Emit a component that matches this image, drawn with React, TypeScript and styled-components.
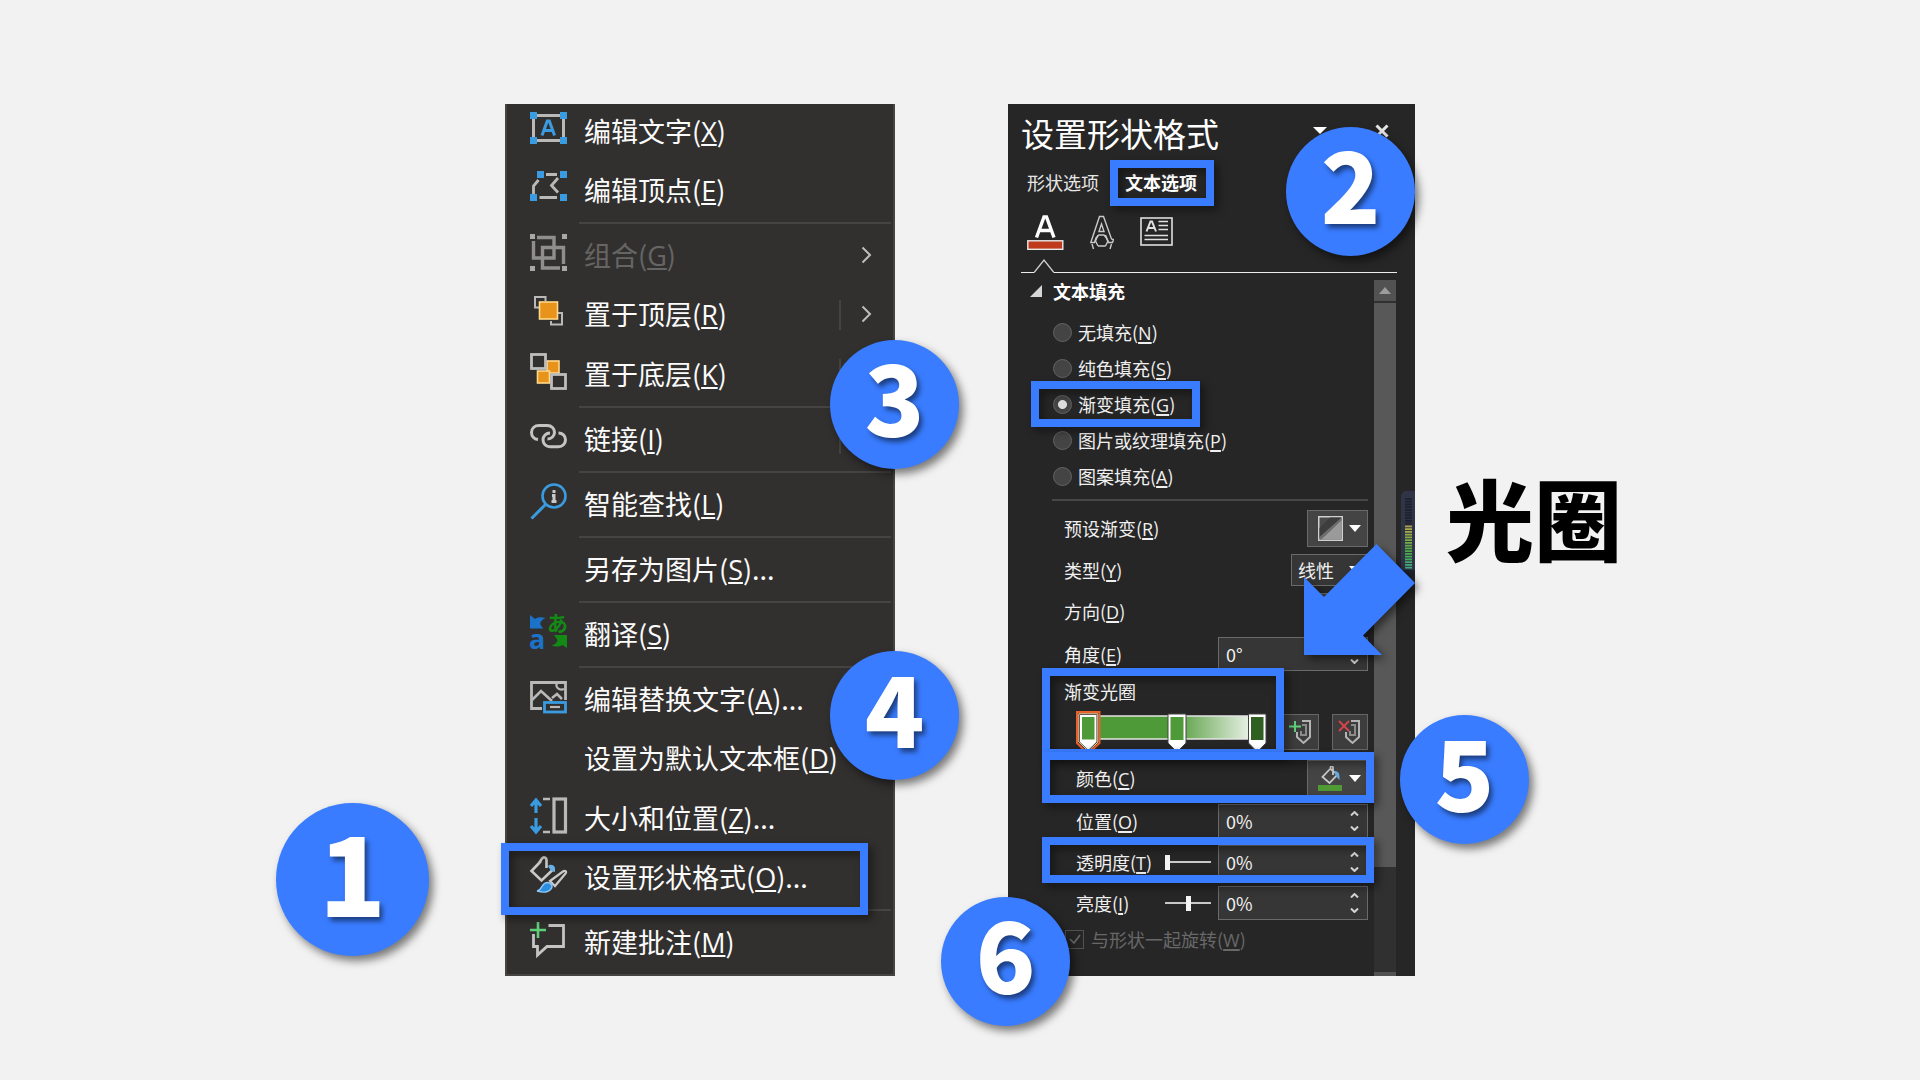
import React, { ReactNode, useState } from "react";
import styled, { createGlobalStyle, css } from "styled-components";

const blue = "#397cff";
const fontStack = `"Noto Sans CJK SC", "Noto Sans", sans-serif`;

const GlobalStyle = createGlobalStyle`
  *, *::before, *::after { box-sizing: border-box; }
  body {
    margin: 0;
    background: #f2f2f2;
    font-family: ${fontStack};
  }
  button, input, select { font: inherit; color: inherit; }
`;

const Stage = styled.main`
  min-height: 100vh;
  display: flex;
  justify-content: center;
  align-items: center;
`;

const Panels = styled.div`
  display: flex;
  align-items: stretch;
  gap: 113px;
`;

/* ---------- annotations ---------- */

interface Inset {
  $top?: number;
  $right?: number;
  $bottom?: number;
  $left?: number;
}

const inset = css<Inset>`
  ${(p) => p.$top !== undefined && `top: ${p.$top}px;`}
  ${(p) => p.$right !== undefined && `right: ${p.$right}px;`}
  ${(p) => p.$bottom !== undefined && `bottom: ${p.$bottom}px;`}
  ${(p) => p.$left !== undefined && `left: ${p.$left}px;`}
`;

const Highlight = styled.span<Inset>`
  position: absolute;
  z-index: 1;
  ${inset}
  border: 8px solid ${blue};
  filter: drop-shadow(4px 4px 4px rgba(0, 0, 0, 0.45));
  pointer-events: none;
`;

const Badge = styled.span<Inset & { $large?: boolean }>`
  position: absolute;
  z-index: 3;
  ${inset}
  width: ${(p) => (p.$large ? 153 : 129)}px;
  height: ${(p) => (p.$large ? 153 : 129)}px;
  padding-bottom: 22px;
  display: flex;
  justify-content: center;
  align-items: center;
  border-radius: 50%;
  background: ${blue};
  box-shadow: 4px 5px 8px rgba(0, 0, 0, 0.5);
  color: #fff;
  font-size: ${(p) => (p.$large ? 110 : 98)}px;
  font-weight: 900;
  line-height: 1;
  text-shadow: 3px 4px 5px rgba(0, 0, 0, 0.5);
`;

const Caption = styled.p`
  position: absolute;
  top: 368px;
  left: 438px;
  margin: 0;
  color: #000;
  font-size: 88px;
  font-weight: 900;
  line-height: 88px;
  white-space: nowrap;
`;

const ArrowSvg = styled.svg`
  position: absolute;
  z-index: 2;
  top: 440px;
  left: 296px;
  overflow: visible;
  filter: drop-shadow(4px 4px 4px rgba(0, 0, 0, 0.5));
  pointer-events: none;
`;

/* ---------- context menu ---------- */

const Menu = styled.nav`
  position: relative;
  width: 390px;
  display: flex;
  flex-direction: column;
  padding-bottom: 2px;
  background: #32302f;
  box-shadow: inset 2px -2px 0 #454443, inset -2px 0 0 #454443;
`;

const MenuItem = styled.button`
  position: relative;
  flex: 1 0 auto;
  display: flex;
  align-items: center;
  padding: 6px 15px 10px 25px;
  border: 0;
  background: none;
  color: #fbfbfb;
  font-size: 27px;
  line-height: 40px;
  text-align: left;
  white-space: nowrap;

  &:disabled {
    color: #666564;
  }
`;

const IconSlot = styled.span`
  width: 37px;
  height: 37px;
  margin: 0 17px 6px 0;
  flex: none;

  svg {
    display: block;
    overflow: visible;
  }
`;

const MenuLabel = styled.span`
  flex: 1;
`;

const Submenu = styled.span<{ $split?: boolean }>`
  height: 30px;
  display: flex;
  align-items: center;
  padding: 0 8px 2px 20px;
  border-left: 2px solid ${(p) => (p.$split ? "#444342" : "transparent")};
`;

const Separator = styled.hr`
  flex: none;
  width: 312px;
  height: 2px;
  margin: 0 0 4px 74px;
  border: 0;
  background: #454442;
`;

const Key = styled.u`
  font-family: "Open Sans", ${fontStack};
  text-decoration-thickness: 2px;
  text-underline-offset: 2px;
`;

/* ---------- format pane ---------- */

const Pane = styled.section`
  position: relative;
  width: 407px;
  display: flex;
  flex-direction: column;
  background: #262626;
  color: #f0f0f0;
  font-size: 18px;
  line-height: 26px;
`;

const PaneHeader = styled.header`
  height: 56px;
  display: flex;
  align-items: center;
  padding: 2px 26px 0 13px;
`;

const PaneTitle = styled.h1`
  flex: 1;
  margin: 0;
  color: #fff;
  font-size: 33px;
  font-weight: 400;
  line-height: 48px;
`;

const PaneButtons = styled.div`
  display: flex;
  gap: 48px;
  padding-bottom: 4px;
`;

const PlainButton = styled.button`
  display: flex;
  padding: 0;
  border: 0;
  background: none;
`;

const TabRow = styled.div`
  display: flex;
  gap: 26px;
  padding-left: 19px;
`;

const Tab = styled.button<{ $active?: boolean }>`
  position: relative;
  height: 46px;
  padding: 0 0 2px;
  border: 0;
  background: none;
  color: ${(p) => (p.$active ? "#fff" : "#e6e6e6")};
  font-weight: ${(p) => (p.$active ? 700 : 400)};
`;

const IconTabs = styled.div`
  height: 52px;
  display: flex;
  align-items: flex-start;
  gap: 26px;
  padding: 8px 19px 0;
`;

const NotchRule = styled.div`
  display: flex;
  align-items: flex-end;
  padding: 0 18px 0 13px;

  svg {
    display: block;
    flex: none;
  }
`;

const RulePart = styled.span<{ $width?: number }>`
  ${(p) => (p.$width ? `width: ${p.$width}px;` : "flex: 1;")}
  height: 1px;
  background: #ececec;
`;

const PaneBody = styled.div`
  flex: 1;
  display: flex;
  padding-right: 19px;
`;

const PaneContent = styled.div`
  flex: 1;
  min-width: 0;
  padding-bottom: 25px;
`;

const SectionTitle = styled.h2`
  height: 36px;
  display: flex;
  align-items: center;
  gap: 11px;
  margin: 0 0 5px;
  padding-left: 22px;
  color: #fff;
  font-size: 18px;
  font-weight: 700;
`;

const RadioRow = styled.label`
  position: relative;
  height: 36px;
  display: flex;
  align-items: center;
  gap: 6px;
  padding-left: 45px;
`;

const Radio = styled.input`
  appearance: none;
  width: 19px;
  height: 19px;
  margin: 0;
  border: 1px solid #636363;
  border-radius: 50%;
  background: #444;

  &:checked {
    background: radial-gradient(circle, #dcdcdc 0 4px, #444 5px);
  }
`;

const Divider = styled.hr`
  height: 2px;
  margin: 5px 6px 9px 44px;
  border: 0;
  background: #474747;
`;

const Form = styled.div`
  display: grid;
  gap: 7px;
`;

const Group = styled.div`
  position: relative;
  display: grid;
  gap: 7px;
`;

const FormRow = styled.div<{ $height: number; $indent?: boolean }>`
  position: relative;
  height: ${(p) => p.$height}px;
  display: flex;
  align-items: center;
  justify-content: space-between;
  padding: 0 6px 0 ${(p) => (p.$indent ? 68 : 56)}px;
`;

const SwatchButton = styled.button`
  width: 61px;
  height: 37px;
  display: flex;
  align-items: center;
  justify-content: space-between;
  padding: 0 6px 0 10px;
  border: 1px solid #6a6a6a;
  background: #444;
`;

const SelectBox = styled.span`
  position: relative;
  width: 77px;
  height: 32px;
  display: flex;

  svg {
    position: absolute;
    top: 12px;
    right: 7px;
    pointer-events: none;
  }
`;

const Select = styled.select`
  appearance: none;
  width: 100%;
  padding: 0 6px;
  border: 1px solid #6a6a6a;
  border-radius: 0;
  background: #363636;
`;

const SpinBox = styled.span`
  width: 150px;
  height: 34px;
  display: flex;
  border: 1px solid #6a6a6a;
  background: #363636;
`;

const SpinInput = styled.input`
  flex: 1;
  min-width: 0;
  padding: 0 7px;
  border: 0;
  background: none;
`;

const SpinButtons = styled.span`
  width: 26px;
  display: flex;
  flex-direction: column;
  justify-content: space-between;
  align-items: center;
  padding: 6px 0;
`;

const SliderAndSpin = styled.span`
  display: flex;
  align-items: center;
  gap: 7px;
`;

const Slider = styled.input`
  appearance: none;
  width: 46px;
  height: 16px;
  margin: 0;
  background: linear-gradient(#c8c8c8, #c8c8c8) center / 100% 2px no-repeat;

  &::-webkit-slider-thumb {
    appearance: none;
    width: 5px;
    height: 15px;
    background: #f4f4f4;
  }
`;

const StopButtons = styled.span`
  display: flex;
  gap: 13px;
`;

const StopButton = styled.button`
  width: 36px;
  height: 36px;
  display: flex;
  align-items: center;
  justify-content: center;
  padding: 0;
  border: 1px solid #666;
  background: #3d3d3d;
`;

const CheckRow = styled.label`
  position: relative;
  height: 24px;
  display: flex;
  align-items: center;
  gap: 7px;
  padding-left: 57px;
  color: #686868;

  svg {
    position: absolute;
    top: 6px;
    left: 61px;
  }
`;

const Checkbox = styled.input`
  appearance: none;
  width: 19px;
  height: 19px;
  margin: 0;
  border: 1px solid #515151;
`;

const Scrollbar = styled.div`
  width: 22px;
  margin-top: 7px;
  display: flex;
  flex-direction: column;
  gap: 2px;
  background: #303030;
`;

const ScrollButton = styled.button`
  height: 21px;
  display: flex;
  align-items: center;
  justify-content: center;
  padding: 0;
  border: 0;
  background: #525252;
`;

const ScrollThumb = styled.span`
  height: 564px;
  background: #585858;
`;

const ScrollEnd = styled.span`
  height: 4px;
  margin-top: auto;
  background: #525252;
`;

const MeterSvg = styled.svg`
  position: absolute;
  top: 386px;
  right: 0;
`;

/* ---------- drawings ---------- */

const grey = "#b9b9b9";
const sky = "#3a9be0";

function Icon({ children }: { children: ReactNode }) {
  return (
    <svg width="37" height="37" viewBox="0 0 37 37" fill="none" aria-hidden="true">
      {children}
    </svg>
  );
}

const EditTextIcon = () => (
  <Icon>
    <rect x="3.500" y="5.500" width="30" height="25" stroke={grey} strokeWidth="3" />
    <path d="M0 2h7v7H0zM30 2h7v7h-7zM0 27h7v7H0zM30 27h7v7h-7z" fill={sky} />
    <path d="M12 25.500 17.300 11h2L24.600 25.500M14 20.500h8.500" stroke={sky} strokeWidth="3" />
  </Icon>
);

const EditPointsIcon = () => (
  <Icon>
    <path d="M16 5.500h11M8.500 11 3.500 17v8M9.500 28.500h17.500M28 9l-6.500 7.500 6.500 7" stroke={grey} strokeWidth="2.800" />
    <path d="M7 2h7v7H7zM30 2h7v7h-7zM0 25h7v7H0zM30 25h7v7h-7z" fill={sky} />
  </Icon>
);

const GroupIcon = () => (
  <Icon>
    <path d="M7 3.500h17V24H3.500V7" stroke="#8f8e8d" strokeWidth="3.400" />
    <path d="M33.500 30V13.500H12.500V34H30" stroke="#8f8e8d" strokeWidth="3.400" />
    <path d="M0 0h5v5H0zM32 0h5v5h-5zM0 32h5v5H0zM32 32h5v5h-5z" fill="#a9a8a7" />
  </Icon>
);

const BringFrontIcon = () => (
  <Icon>
    <path d="M9 14.500H5V4h10.500V8M28 20h4v11.500H21V28" stroke={grey} strokeWidth="2" />
    <rect x="9.500" y="9" width="18" height="17" fill="#e8931c" stroke="#ffd98a" strokeWidth="1.600" />
  </Icon>
);

const SendBackIcon = () => (
  <Icon>
    <rect x="17" y="8" width="12" height="12" fill="#e8931c" stroke="#ffd98a" strokeWidth="1.600" />
    <rect x="7.500" y="18" width="12" height="12" fill="#e8931c" stroke="#ffd98a" strokeWidth="1.600" />
    <rect x="1.500" y="1.500" width="14" height="14" fill="#32302f" stroke="#bdbdbd" strokeWidth="2.800" />
    <rect x="21.500" y="21.500" width="14" height="14" fill="#32302f" stroke="#bdbdbd" strokeWidth="2.800" />
  </Icon>
);

const LinkIcon = () => (
  <Icon>
    <path
      d="M8 21.500c-4-.5-6.500-3.500-6.500-7 0-4 3-7 7.500-7h8.500c4 0 7 3 7 6.800 0 3.700-3 6.700-7 6.700"
      stroke="#c4c4c4"
      strokeWidth="3"
    />
    <path
      d="M20 15c-4 0-7 3-7 6.800 0 3.900 3 7 7 7h8.500c4 0 7-3.100 7-7s-3-6.800-7-6.800"
      stroke="#c4c4c4"
      strokeWidth="3"
    />
  </Icon>
);

const LookupIcon = () => (
  <Icon>
    <circle cx="24" cy="13" r="11.500" stroke={sky} strokeWidth="2.600" />
    <path d="M15.500 21.500 1.500 35.500" stroke={sky} strokeWidth="3" />
    <path d="M24 7v3M22 12.500h2v6M21.500 18.500h5" stroke="#c8c8c8" strokeWidth="3" />
  </Icon>
);

const TranslateIcon = () => (
  <Icon>
    <path d="M0 2l5 4c3-2 6-2 10.500-1C12 6.500 10.500 8.500 10 11l3 4.500H0z" fill="#1a72c9" />
    <path d="M37 35l-4.500-3c-4 2-7 2-11 .5 4-1 5.500-3 6-5.500L24 22h13z" fill="#138a13" />
    <text x="-1" y="36" fill="#1a72c9" fontSize="27" fontWeight="700" fontFamily="Open Sans, sans-serif">a</text>
    <text x="17" y="18" fill="#138a13" fontSize="21" fontWeight="700" fontFamily="Noto Sans CJK JP, sans-serif">あ</text>
  </Icon>
);

const AltTextIcon = () => (
  <Icon>
    <path d="M12 30.500H1.500v-26h34V22" stroke={grey} strokeWidth="2.800" />
    <path d="M2 22 11 13l11 10M22 20l5-4 5 5" stroke={grey} strokeWidth="2.600" />
    <path d="M27 5c-2 4 2 8 7 6" stroke={grey} strokeWidth="2.200" />
    <rect x="14.500" y="24.500" width="21" height="9.500" stroke={sky} strokeWidth="2.800" />
    <path d="M20 29h10" stroke={grey} strokeWidth="2.200" />
  </Icon>
);

const SizeIcon = () => (
  <Icon>
    <path d="M6 16V3M1 9l5-6 5 6M6 21v13M1 29l5 6 5-6" stroke={sky} strokeWidth="3.200" />
    <path d="M13 2h7M13 35h7" stroke={grey} strokeWidth="2.400" />
    <rect x="24" y="2" width="11.500" height="33" stroke={grey} strokeWidth="3.200" />
  </Icon>
);

const FormatShapeIcon = () => (
  <Icon>
    <path d="M11 5 1.500 15l10 9.500L23 13.500M9 7l3-4.500c1.500-2 4.500-1 4.500 1.500V12" stroke="#c9c9c9" strokeWidth="2.600" />
    <path d="M18 10c2-2 6-1.500 7 2v4l-4-1z" fill="#67b1ea" />
    <path d="M20 25 33 15.500c2-1.500 4 0 2.500 2L25 30z" stroke="#c9c9c9" strokeWidth="2.200" />
    <path d="M7 35c5 0 4-8 10-8.500 4 0 6.500 3.500 4 6.500-3 3.500-9 3.500-14 2z" fill="#2c8ee0" stroke="#8fc8f5" strokeWidth="1.400" />
  </Icon>
);

const CommentIcon = () => (
  <Icon>
    <path d="M18.500 4.500h15V25.500H17L7.500 34v-8.500h-4V13" stroke="#c4c4c4" strokeWidth="2.800" />
    <path d="M8 1v16M0 9h16" stroke="#5fd07a" strokeWidth="2.600" />
  </Icon>
);

const Chevron = () => (
  <svg width="11" height="18" viewBox="0 0 11 18" fill="none" aria-hidden="true">
    <path d="M1.500 1.500 9 9l-7.500 7.500" stroke="#bdbdbd" strokeWidth="2" />
  </svg>
);

const Caret = () => (
  <svg width="12" height="7" viewBox="0 0 12 7" aria-hidden="true">
    <path d="M0 0h12L6 7z" fill="#fff" />
  </svg>
);

const SpinArrow = ({ up }: { up?: boolean }) => (
  <svg width="9" height="5" viewBox="0 0 9 5" fill="none" aria-hidden="true">
    <path d={up ? "M1 4.500 4.500 1 8 4.500" : "M1 .5 4.500 4 8 .5"} stroke="#d4d4d4" strokeWidth="2" />
  </svg>
);

const TextFillIcon = () => (
  <svg width="37" height="36" viewBox="0 0 37 36" fill="none" aria-hidden="true">
    <path d="M9.500 23.500 17 3h2.500L27 23.500M12.500 16.500h11.500" stroke="#fff" strokeWidth="3.400" />
    <rect x=".8" y="26.800" width="35" height="8.500" fill="#bf3a1c" stroke="#e8e8e8" strokeWidth="1.400" />
  </svg>
);

const TextOutlineIcon = () => (
  <svg width="24" height="36" viewBox="0 0 24 36" fill="none" stroke="#c9c9c9" strokeWidth="1.400" aria-hidden="true">
    <path d="M9.500 2.500h4L21.500 25l2 .5-1 3h-4l-2.500-5-2-2.500h-5L6 24l-1.500 4.500H.8l1-3L9.500 2.500z" />
    <path d="M11.500 10 9 17.500h5zM8 21l-2.500 6 2.500 5M15.500 21l2.500 6-2.500 5M8 32h7.500M2 30l1.500 5M21.500 30 20 35" />
  </svg>
);

const TextBoxIcon = () => (
  <svg width="33" height="36" viewBox="0 0 33 36" fill="none" stroke="#e0e0e0" aria-hidden="true">
    <rect x="1" y="4" width="31" height="27" strokeWidth="1.600" />
    <path d="M6.500 17.500 10.500 7.500h1.500L16 17.500M8 14h6.500" strokeWidth="2" />
    <path d="M18.500 7.500H28M18.500 11.500H28M18.500 15.500H28M4.500 21.500H28M4.500 25.500H28" strokeWidth="1.500" />
  </svg>
);

const FillBucketIcon = () => (
  <svg width="26" height="26" viewBox="0 0 26 26" fill="none" aria-hidden="true">
    <rect y="19" width="24" height="6" fill="#4f9a35" />
    <path d="M12 3 4.500 11l7 6 8-8.500L12.500 3V1c0-1 2.500-1 2.500.5V9" stroke="#c9c9c9" strokeWidth="1.800" />
    <path d="M16 5c4-.5 6 2 5.500 9l-3-3z" fill="#67a9dc" />
  </svg>
);

const PresetIcon = () => (
  <svg width="25" height="25" viewBox="0 0 25 25" aria-hidden="true">
    <rect width="25" height="25" fill="#d0d0d0" />
    <rect x="1.500" y="1.500" width="22" height="22" fill="#4a4a4a" />
    <path d="M1.500 12 12 1.500h11.500L1.500 22z" fill="#3d3d3d" />
    <path d="M23.500 4v19.500H3z" fill="#9a9a9a" />
    <path d="M23.500 1.500V4L3 23.500H1.500V21z" fill="#6d6d6d" />
  </svg>
);

const StopIcon = ({ remove }: { remove?: boolean }) => (
  <svg width="24" height="26" viewBox="0 0 24 26" fill="none" aria-hidden="true">
    <path d="M13 2h8v16l-6.500 6L8 18v-5" stroke="#b4b4b4" strokeWidth="2" />
    <path d="M13 6h4v10h-5v-4" stroke="#8b8b8b" strokeWidth="2" />
    {remove ? (
      <path d="M1 2l10 10M11 2 1 12" stroke="#d9444a" strokeWidth="1.800" />
    ) : (
      <path d="M6 2v11M0 7.500h12" stroke="#5fd07a" strokeWidth="2" />
    )}
  </svg>
);

const GradientStops = () => (
  <svg width="191" height="42" viewBox="0 0 191 42" role="img" aria-label="渐变光圈">
    <defs>
      <linearGradient id="ramp">
        <stop offset="0" stopColor="#4f9a38" />
        <stop offset="0.5" stopColor="#4f9a38" />
        <stop offset="1" stopColor="#f4f7f3" />
      </linearGradient>
    </defs>
    <rect x="12" y="5" width="168" height="23" fill="url(#ramp)" stroke="#e4e4e4" strokeWidth="1.500" />
    <path d="M1 1h22.500v31L14 41h-4L1 32z" fill="#262626" stroke="#e8622a" strokeWidth="2" />
    <path d="M2.800 2.800h19v28.500L13 39.500h-1.500L2.800 31z" fill="none" stroke="#ffd9a8" strokeWidth="1" />
    <path d="M4 4h16.500v27L12.200 39 4 31z" fill="#fff" />
    <rect x="6" y="6" width="12.500" height="22.500" fill="#4f9a38" />
    <path d="M92 3h18v29l-9 9-9-9z" fill="#fff" stroke="#444" strokeWidth="1" />
    <rect x="94.500" y="6" width="13" height="23" fill="#4f9a38" />
    <path d="M172.500 3h17.500v29l-8.700 9-8.800-9z" fill="#fff" stroke="#444" strokeWidth="1" />
    <rect x="175" y="6" width="12.500" height="23" fill="#2f5f21" />
  </svg>
);

const Meter = () => (
  <MeterSvg width="15" height="88" viewBox="0 0 15 88" aria-hidden="true">
    <path d="M1 5 4 1h11v86H1z" fill="#2f3446" />
    <path d="M1 80h14v7H1z" fill="#1f222c" />
    {Array.from({ length: 26 }, (_, i) => (
      <rect
        key={i}
        x="5"
        y={8 + i * 2.75}
        width="7"
        height="1.800"
        fill={i < 10 ? "#1d2130" : `hsl(${52 + (i - 10) * 7}, 42%, 47%)`}
      />
    ))}
  </MeterSvg>
);

/* ---------- content ---------- */

interface Entry {
  text: string;
  hotkey: string;
  more?: boolean;
  icon?: ReactNode;
  submenu?: "plain" | "split";
  disabled?: boolean;
  marked?: boolean;
  lineAfter?: boolean;
}

const entries: Entry[] = [
  { text: "编辑文字", hotkey: "X", icon: <EditTextIcon /> },
  { text: "编辑顶点", hotkey: "E", icon: <EditPointsIcon />, lineAfter: true },
  { text: "组合", hotkey: "G", icon: <GroupIcon />, submenu: "plain", disabled: true },
  { text: "置于顶层", hotkey: "R", icon: <BringFrontIcon />, submenu: "split" },
  { text: "置于底层", hotkey: "K", icon: <SendBackIcon />, submenu: "split", lineAfter: true },
  { text: "链接", hotkey: "I", icon: <LinkIcon />, submenu: "split", lineAfter: true },
  { text: "智能查找", hotkey: "L", icon: <LookupIcon />, lineAfter: true },
  { text: "另存为图片", hotkey: "S", more: true, lineAfter: true },
  { text: "翻译", hotkey: "S", icon: <TranslateIcon />, lineAfter: true },
  { text: "编辑替换文字", hotkey: "A", more: true, icon: <AltTextIcon /> },
  { text: "设置为默认文本框", hotkey: "D" },
  { text: "大小和位置", hotkey: "Z", more: true, icon: <SizeIcon /> },
  { text: "设置形状格式", hotkey: "O", more: true, icon: <FormatShapeIcon />, marked: true, lineAfter: true },
  { text: "新建批注", hotkey: "M", icon: <CommentIcon /> },
];

const fills = [
  { text: "无填充", hotkey: "N" },
  { text: "纯色填充", hotkey: "S" },
  { text: "渐变填充", hotkey: "G" },
  { text: "图片或纹理填充", hotkey: "P" },
  { text: "图案填充", hotkey: "A" },
];

function Hot({ text, hotkey, more }: { text: string; hotkey: string; more?: boolean }) {
  return (
    <>
      {text}(<Key>{hotkey}</Key>){more && "..."}
    </>
  );
}

function Spin({ id, value }: { id: string; value: string }) {
  return (
    <SpinBox>
      <SpinInput id={id} defaultValue={value} />
      <SpinButtons>
        <PlainButton aria-label="增加"><SpinArrow up /></PlainButton>
        <PlainButton aria-label="减少"><SpinArrow /></PlainButton>
      </SpinButtons>
    </SpinBox>
  );
}

export default function App() {
  const [fill, setFill] = useState("G");

  return (
    <>
      <GlobalStyle />
      <Stage>
        <Panels>
          <Menu>
            {entries.map((e) => (
              <React.Fragment key={e.text}>
                <MenuItem disabled={e.disabled}>
                  <IconSlot>{e.icon}</IconSlot>
                  <MenuLabel>
                    <Hot text={e.text} hotkey={e.hotkey} more={e.more} />
                  </MenuLabel>
                  {e.submenu && (
                    <Submenu $split={e.submenu === "split"}>
                      <Chevron />
                    </Submenu>
                  )}
                  {e.marked && <Highlight $top={-7} $right={27} $bottom={-6} $left={-4} />}
                </MenuItem>
                {e.lineAfter && <Separator />}
              </React.Fragment>
            ))}
            <Badge $large $top={699} $left={-229}>1</Badge>
            <Badge $top={236} $right={-64}>3</Badge>
            <Badge $top={547} $right={-64}>4</Badge>
          </Menu>

          <Pane>
            <PaneHeader>
              <PaneTitle>设置形状格式</PaneTitle>
              <PaneButtons>
                <PlainButton aria-label="任务窗格选项">
                  <svg width="14" height="14" viewBox="0 0 14 14" aria-hidden="true">
                    <path d="M0 3h14L7 10z" fill="#fff" />
                  </svg>
                </PlainButton>
                <PlainButton aria-label="关闭">
                  <svg width="14" height="14" viewBox="0 0 14 14" aria-hidden="true">
                    <path d="M1.500 1.500l11 11M12.500 1.500l-11 11" stroke="#e6e6e6" strokeWidth="3" />
                  </svg>
                </PlainButton>
              </PaneButtons>
            </PaneHeader>

            <TabRow>
              <Tab>形状选项</Tab>
              <Tab $active>
                文本选项
                <Highlight $top={0} $right={-17} $bottom={0} $left={-15} />
              </Tab>
            </TabRow>

            <IconTabs>
              <PlainButton aria-label="文本填充与轮廓"><TextFillIcon /></PlainButton>
              <PlainButton aria-label="文字效果"><TextOutlineIcon /></PlainButton>
              <PlainButton aria-label="文本框"><TextBoxIcon /></PlainButton>
            </IconTabs>

            <NotchRule>
              <RulePart $width={13} />
              <svg width="20" height="15" viewBox="0 0 20 15" fill="none" aria-hidden="true">
                <path d="M0 14.500 10 2l10 12.500" stroke="#d0d0d0" strokeWidth="1.400" />
              </svg>
              <RulePart />
            </NotchRule>

            <PaneBody>
              <PaneContent>
                <SectionTitle>
                  <svg width="12" height="12" viewBox="0 0 12 12" aria-hidden="true">
                    <path d="M12 0v12H0z" fill="#d6d6d6" />
                  </svg>
                  文本填充
                </SectionTitle>

                {fills.map((f) => (
                  <RadioRow key={f.hotkey}>
                    <Radio
                      type="radio"
                      name="fill"
                      checked={fill === f.hotkey}
                      onChange={() => setFill(f.hotkey)}
                    />
                    <span><Hot text={f.text} hotkey={f.hotkey} /></span>
                    {f.hotkey === "G" && <Highlight $top={-5} $right={174} $bottom={-5} $left={23} />}
                  </RadioRow>
                ))}

                <Divider />

                <Form>
                  <FormRow $height={37}>
                    <label htmlFor="preset"><Hot text="预设渐变" hotkey="R" /></label>
                    <SwatchButton id="preset"><PresetIcon /><Caret /></SwatchButton>
                  </FormRow>
                  <FormRow $height={32}>
                    <label htmlFor="kind"><Hot text="类型" hotkey="Y" /></label>
                    <SelectBox>
                      <Select id="kind"><option>线性</option></Select>
                      <Caret />
                    </SelectBox>
                  </FormRow>
                  <FormRow $height={37}>
                    <label htmlFor="direction"><Hot text="方向" hotkey="D" /></label>
                    <SwatchButton id="direction"><PresetIcon /><Caret /></SwatchButton>
                  </FormRow>
                  <FormRow $height={34}>
                    <label htmlFor="angle"><Hot text="角度" hotkey="E" /></label>
                    <Spin id="angle" value="0°" />
                  </FormRow>
                  <Group>
                    <FormRow $height={26}>渐变光圈</FormRow>
                    <FormRow $height={42} $indent>
                      <GradientStops />
                      <StopButtons>
                        <StopButton aria-label="添加渐变光圈"><StopIcon /></StopButton>
                        <StopButton aria-label="删除渐变光圈"><StopIcon remove /></StopButton>
                      </StopButtons>
                    </FormRow>
                    <Highlight $top={-10} $right={90} $bottom={-4} $left={34} />
                  </Group>
                  <FormRow $height={37} $indent>
                    <label htmlFor="color"><Hot text="颜色" hotkey="C" /></label>
                    <SwatchButton id="color"><FillBucketIcon /><Caret /></SwatchButton>
                    <Highlight $top={-8} $right={0} $bottom={-6} $left={34} />
                  </FormRow>
                  <FormRow $height={34} $indent>
                    <label htmlFor="position"><Hot text="位置" hotkey="O" /></label>
                    <Spin id="position" value="0%" />
                  </FormRow>
                  <FormRow $height={34} $indent>
                    <label htmlFor="alpha"><Hot text="透明度" hotkey="T" /></label>
                    <SliderAndSpin>
                      <Slider type="range" aria-label="透明度" defaultValue={0} />
                      <Spin id="alpha" value="0%" />
                    </SliderAndSpin>
                    <Highlight $top={-8} $right={0} $bottom={-4} $left={34} />
                  </FormRow>
                  <FormRow $height={34} $indent>
                    <label htmlFor="brightness"><Hot text="亮度" hotkey="I" /></label>
                    <SliderAndSpin>
                      <Slider type="range" aria-label="亮度" defaultValue={50} />
                      <Spin id="brightness" value="0%" />
                    </SliderAndSpin>
                  </FormRow>
                  <CheckRow>
                    <Checkbox type="checkbox" defaultChecked disabled />
                    <svg width="12" height="12" viewBox="0 0 12 12" fill="none" aria-hidden="true">
                      <path d="M1 6l4 4 6-8" stroke="#686868" strokeWidth="1.600" />
                    </svg>
                    <span><Hot text="与形状一起旋转" hotkey="W" /></span>
                  </CheckRow>
                </Form>
              </PaneContent>

              <Scrollbar>
                <ScrollButton aria-label="向上滚动">
                  <svg width="12" height="7" viewBox="0 0 12 7" aria-hidden="true">
                    <path d="M0 7h12L6 0z" fill="#9c9c9c" />
                  </svg>
                </ScrollButton>
                <ScrollThumb />
                <ScrollEnd />
              </Scrollbar>
            </PaneBody>

            <Meter />
            <ArrowSvg width="111" height="111" viewBox="0 0 111 111" aria-hidden="true">
              <path d="M0 111V33l20 20L72.500 0 111 39 59 91.500 78 111z" fill={blue} />
            </ArrowSvg>
            <Caption>光圈</Caption>
            <Badge $top={23} $right={0}>2</Badge>
            <Badge $top={611} $right={-114}>5</Badge>
            <Badge $bottom={-50} $left={-67}>6</Badge>
          </Pane>
        </Panels>
      </Stage>
    </>
  );
}
